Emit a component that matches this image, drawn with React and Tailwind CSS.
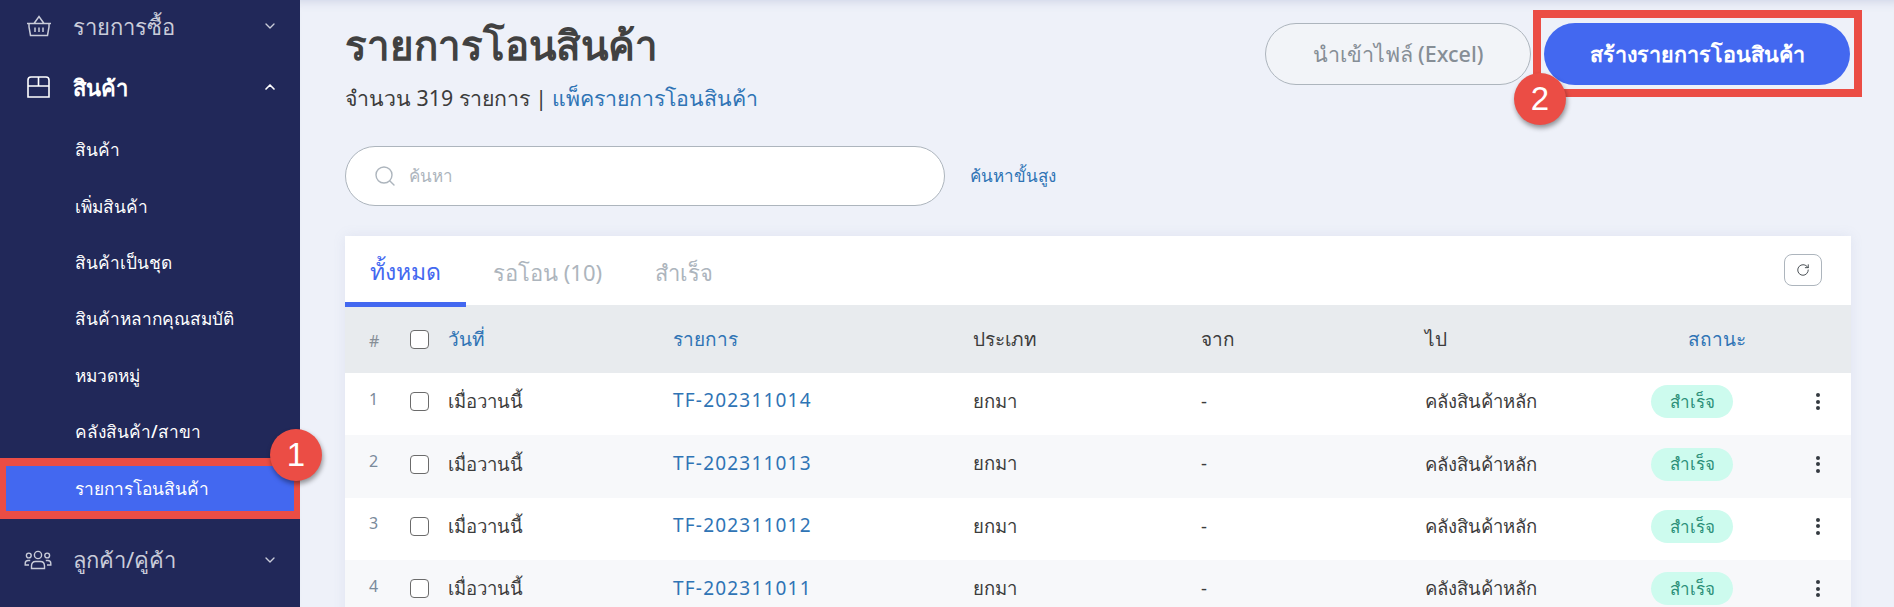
import React from "react";
import { ChevronDown, ChevronUp, Search, RotateCw } from "lucide-react";

const BasketIcon = () => (
  <svg width="26" height="22" viewBox="0 0 26 22" fill="none" stroke="#c9ccd9" strokeWidth="1.5" className="shrink-0">
    <path d="M1 8.5h24M3 8.5v3.5l1.5 8.5h17L23 12V8.5M8 8.5 13 1.5l5 7M9 12.5v4.500M13 12.5v4.500M17 12.5v4.500" />
  </svg>
);
const BoxIcon = () => (
  <svg width="23" height="22" viewBox="0 0 23 22" fill="none" stroke="#ffffff" strokeWidth="1.6" className="shrink-0">
    <path d="M1 10V4Q1 1 4 1h15q3 0 3 3v6M1 10h21v11H1zM11.500 1v9" />
  </svg>
);
const UsersIcon = () => (
  <svg width="28" height="20" viewBox="0 0 28 20" fill="none" stroke="#c9ccd9" strokeWidth="1.4" className="shrink-0">
    <circle cx="14" cy="5" r="3.6" /><circle cx="4.8" cy="5.5" r="2.4" /><circle cx="23.2" cy="5.5" r="2.4" />
    <path d="M7.5 18.5v-2.5q0-4.5 4-4.5h5q4 0 4 4.500v2.500zM5 15H1.200v-1.500q0-3 3-3h2M23 15h3.800v-1.500q0-3-3-3h-2" />
  </svg>
);

const Marker = ({ n, className }) => (
  <div className={`absolute w-[52px] h-[52px] rounded-full bg-[#eb4d45] text-white flex items-center justify-center text-[33px] z-20 shadow-[1px_3px_5px_rgba(0,0,0,0.4)] font-['Liberation_Sans',sans-serif] ${className}`}>{n}</div>
);

const rows = [
  ["1", "TF-202311014", "bg-white"],
  ["2", "TF-202311013", "bg-[#f7f8fa]"],
  ["3", "TF-202311012", "bg-white"],
  ["4", "TF-202311011", "bg-[#f7f8fa]"],
];
const grid = "grid grid-cols-[65px_38px_225px_300px_228px_224px_226px_200px] items-center";
const sub = ["สินค้า", "เพิ่มสินค้า", "สินค้าเป็นชุด", "สินค้าหลากคุณสมบัติ", "หมวดหมู่", "คลังสินค้า/สาขา"];

const Box = () => <span className="block w-[19px] h-[19px] rounded-[4px] border-[1.5px] border-[#6b6b6b] bg-white" />;

export default function App() {
  return (
    <div className="flex w-[1894px] h-[607px] overflow-hidden bg-[#eef1f9] font-['Noto_Sans','Noto_Sans_CJK_SC',sans-serif]">
      <aside className="w-[300px] shrink-0 bg-[#212859] flex flex-col">
        <div className="h-[52px] flex items-center pl-[26px] pr-[22px] text-[#c9ccd9] text-[22px]">
          <BasketIcon />
          <span className="ml-[21px] flex-1">รายการซื้อ</span>
          <ChevronDown size={16} />
        </div>
        <div className="h-[52px] mt-[9px] mb-[2px] flex items-center pl-[27px] pr-[22px] text-white text-[22px] font-semibold">
          <BoxIcon />
          <span className="ml-[23px] flex-1">สินค้า</span>
          <ChevronUp size={16} strokeWidth={2.5} />
        </div>
        <div className="mt-[7px] flex flex-col">
          {sub.map((s) => (
            <div key={s} className="h-[56.4px] flex items-center pl-[75px] text-white text-[17.3px] font-medium">{s}</div>
          ))}
          <div className="relative h-[56.4px] flex items-center pl-[75px] text-white text-[17.3px] font-medium bg-[#4368f0]">
            รายการโอนสินค้า
            <div className="absolute left-0 right-0 top-[-2px] bottom-[-2px] border-x-[6px] border-x-[#eb4d45] border-y-[8px] border-y-[#eb4d45]" />
          </div>
        </div>
        <div className="h-[52px] mt-[17px] flex items-center pl-[24px] pr-[22px] text-[#c9ccd9] text-[22px]">
          <UsersIcon />
          <span className="ml-[21px] flex-1">ลูกค้า/คู่ค้า</span>
          <ChevronDown size={16} />
        </div>
      </aside>

      <main className="relative flex-1 pl-[45px] pr-[44px] bg-[#eef1f9] shadow-[inset_0_10px_10px_-8px_rgba(120,130,180,0.25)]">
        <Marker n="1" className="left-[-30px] top-[429px]" />
        <div className="flex justify-between h-[146px]">
          <div>
            <h1 className="mt-[15px] text-[40.2px] leading-[60px] font-semibold text-[#414141]">รายการโอนสินค้า</h1>
            <p className="mt-[9px] text-[21.3px] leading-[28px] text-[#3c3c3c]">
              จำนวน 319 รายการ | <span className="text-[#2f74b5]">แพ็ครายการโอนสินค้า</span>
            </p>
          </div>
          <div className="relative flex items-start gap-[13px] pt-[23px] pr-[1px]">
            <button className="w-[266px] h-[62px] rounded-full border border-[#adb5bd] bg-[#f2f4f8] text-[#868e96] text-[21.5px] font-medium">นำเข้าไฟล์ (Excel)</button>
            <div className="relative">
              <button className="w-[306px] h-[62px] rounded-full bg-[#4368f0] text-white text-[21.5px] font-semibold">สร้างรายการโอนสินค้า</button>
              <div className="absolute left-[-11px] right-[-12px] top-[-13px] bottom-[-12px] border-[8px] border-[#eb4d45]" />
              <Marker n="2" className="left-[-30px] top-[50px]" />
            </div>
          </div>
        </div>

        <div className="flex items-center h-[60px]">
          <div className="w-[600px] h-[60px] rounded-full border border-[#adb5bd] bg-white flex items-center pl-[27px]">
            <Search size={24} strokeWidth={1.4} className="text-[#adb5bd]" />
            <span className="ml-[12px] text-[17px] text-[#adb5bd]">ค้นหา</span>
          </div>
          <span className="ml-[25px] text-[17px] text-[#2f74b5]">ค้นหาขั้นสูง</span>
        </div>

        <section className="mt-[30px] bg-white shadow-[0_0_12px_rgba(120,130,180,0.12)]">
          <div className="relative h-[69px] flex items-end">
            <div className="w-[121px] h-[66px] flex items-center justify-center text-[23px] text-[#4368f0] border-b-[5px] border-[#4368f0] relative top-[2px] z-10">ทั้งหมด</div>
            <div className="ml-[27px] h-[66px] flex items-center text-[22px] text-[#adb5bd]">รอโอน (10)</div>
            <div className="ml-[53px] h-[66px] flex items-center text-[22px] text-[#adb5bd]">สำเร็จ</div>
            <div className="ml-auto mr-[29px] mb-[19px] w-[38px] h-[32px] rounded-[8px] border border-[#adb5bd] flex items-center justify-center">
              <RotateCw size={14} strokeWidth={1.5} className="text-[#343a40]" />
            </div>
          </div>
          <div className={`${grid} h-[68px] bg-[#e8ebee] text-[19px]`}>
            <span className="pl-[24px] text-[16px] text-[#868e96] pt-[4px]">#</span>
            <Box />
            <span className="text-[#2f74b5]">วันที่</span>
            <span className="text-[#2f74b5]">รายการ</span>
            <span className="text-[#3c3c3c]">ประเภท</span>
            <span className="text-[#3c3c3c]">จาก</span>
            <span className="text-[#3c3c3c]">ไป</span>
            <span className="pl-[37px] text-[#2f74b5]">สถานะ</span>
          </div>
          {rows.map(([n, id, bg]) => (
            <div key={n} className={`${grid} h-[62.4px] pb-[5px] ${bg} text-[18.5px] text-[#3c3c3c]`}>
              <span className="pl-[24px] text-[16px] text-[#7a8a9a] pb-[6px]">{n}</span>
              <Box />
              <span className="pb-[1px]">เมื่อวานนี้</span>
              <span className="pb-[2px] text-[#2f74b5] text-[19px] tracking-[1.2px]">{id}</span>
              <span className="pb-[2px]">ยกมา</span>
              <span className="pb-[2px]">-</span>
              <span className="pb-[1px]">คลังสินค้าหลัก</span>
              <div className="flex items-center">
                <span className="w-[82px] h-[33px] rounded-full bg-[#cdfbee] text-[#2b8f78] text-[17px] flex items-center justify-center">สำเร็จ</span>
                <span className="ml-[83px] flex flex-col gap-[2.5px]">
                  <i className="block w-[4px] h-[4px] rounded-full bg-[#343a40]" />
                  <i className="block w-[4px] h-[4px] rounded-full bg-[#343a40]" />
                  <i className="block w-[4px] h-[4px] rounded-full bg-[#343a40]" />
                </span>
              </div>
            </div>
          ))}
        </section>
      </main>
    </div>
  );
}
